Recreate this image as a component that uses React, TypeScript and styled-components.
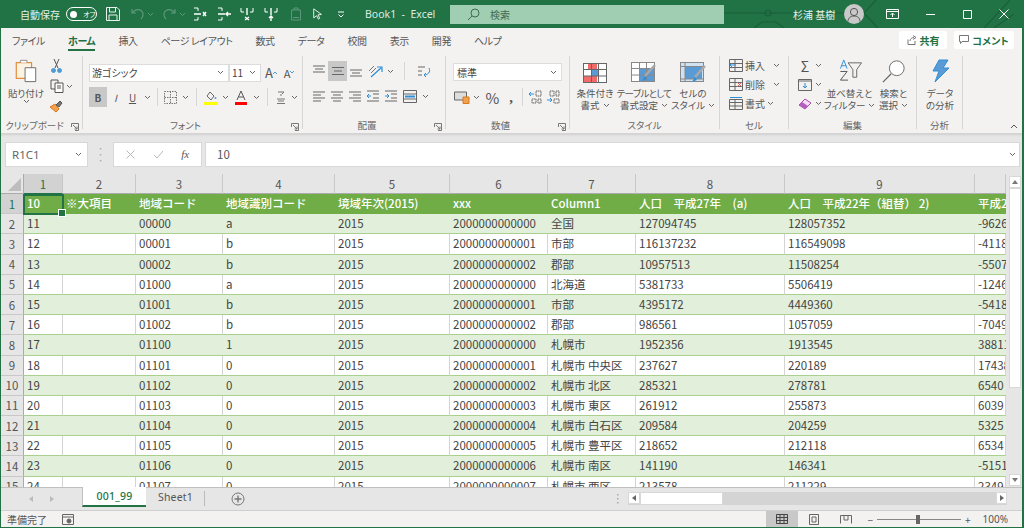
import React from "react"
import styled, { createGlobalStyle } from "styled-components"

const JP = `"Noto Sans CJK JP", "Noto Sans", "Liberation Sans", sans-serif`
const COLS = "39px 73px 87px 112px 115px 98px 88px 149px 190px 31px"

const rows = [
  ["11", "", "00000", "a", "2015", "2000000000000", "全国", "127094745", "128057352", "-9626"],
  ["12", "", "00001", "b", "2015", "2000000000001", "市部", "116137232", "116549098", "-4118"],
  ["13", "", "00002", "b", "2015", "2000000000002", "郡部", "10957513", "11508254", "-5507"],
  ["14", "", "01000", "a", "2015", "2000000000000", "北海道", "5381733", "5506419", "-1246"],
  ["15", "", "01001", "b", "2015", "2000000000001", "市部", "4395172", "4449360", "-5418"],
  ["16", "", "01002", "b", "2015", "2000000000002", "郡部", "986561", "1057059", "-7049"],
  ["17", "", "01100", "1", "2015", "2000000000000", "札幌市", "1952356", "1913545", "38811"],
  ["18", "", "01101", "0", "2015", "2000000000001", "札幌市 中央区", "237627", "220189", "17438"],
  ["19", "", "01102", "0", "2015", "2000000000002", "札幌市 北区", "285321", "278781", "6540"],
  ["20", "", "01103", "0", "2015", "2000000000003", "札幌市 東区", "261912", "255873", "6039"],
  ["21", "", "01104", "0", "2015", "2000000000004", "札幌市 白石区", "209584", "204259", "5325"],
  ["22", "", "01105", "0", "2015", "2000000000005", "札幌市 豊平区", "218652", "212118", "6534"],
  ["23", "", "01106", "0", "2015", "2000000000006", "札幌市 南区", "141190", "146341", "-5151"],
  ["24", "", "01107", "0", "2015", "2000000000007", "札幌市 西区", "213578", "211229", "2349"],
]
const headers = ["10", "※大項目", "地域コード", "地域識別コード", "境域年次(2015)", "xxx", "Column1", "人口　平成27年　(a)", "人口　平成22年（組替） 2)", "平成2"]
const tabs = ["ファイル", "ホーム", "挿入", "ページ レイアウト", "数式", "データ", "校閲", "表示", "開発", "ヘルプ"]

const Global = createGlobalStyle`
  html, body { margin: 0; padding: 0; background: #217346; }
  * { box-sizing: border-box; }
`

const Win = styled.div`
  width: 1024px;
  height: 528px;
  overflow: hidden;
  display: flex;
  flex-direction: column;
  padding: 0 2px 1px 1px;
  background: #217346;
  font-family: ${JP};
  font-feature-settings: "palt";
  color: #444;
  font-size: 10px;
`

/* title bar */
const TitleBar = styled.div`
  position: relative;
  height: 28px;
  margin: 0 -2px 0 -1px;
  display: flex;
  align-items: center;
  color: #fff;
  background: #217346;
  flex: none;
`
const Pattern = styled.svg`
  position: absolute;
  right: 0;
  top: 0;
`
const AutoSave = styled.span`
  margin-left: 20px;
  font-size: 10px;
  color: #e4f0e9;
`
const Toggle = styled.span`
  width: 31px;
  height: 14px;
  margin-left: 6px;
  border: 1px solid #fff;
  border-radius: 7px;
  display: flex;
  align-items: center;
  gap: 6px;
  padding-left: 3px;
  font-size: 7px;
  &::before {
    content: "";
    width: 7px;
    height: 7px;
    border-radius: 50%;
    background: #fff;
  }
`
const Qat = styled.div`
  display: flex;
  align-items: center;
  margin-left: 8px;
  width: 260px;
  flex: none;
`
const QatSlot = styled.span<{ $w: number }>`
  width: ${p => p.$w}px;
  display: flex;
  justify-content: center;
  flex: none;
`
const BookName = styled.span`
  width: 85px;
  flex: none;
  font-size: 10.5px;
  color: #dcebe2;
  font-family: "Noto Sans", sans-serif;
  white-space: pre;
`
const SearchBox = styled.div`
  width: 274px;
  height: 19px;
  flex: none;
  background: #a0ceb3;
  display: flex;
  align-items: center;
  color: #3f6b52;
  padding-left: 17px;
  gap: 10px;
  font-size: 10px;
`
const UserArea = styled.div`
  position: relative;
  margin-left: 69px;
  display: flex;
  align-items: center;
  font-size: 10px;
  color: #e8f2ec;
  white-space: nowrap;
`
const Avatar = styled.span`
  width: 20px;
  height: 20px;
  margin-left: 9px;
  border-radius: 50%;
  background: #c9c9c9;
  display: flex;
  align-items: center;
  justify-content: center;
`
const WinBtn = styled.span<{ $ml: number }>`
  margin-left: ${p => p.$ml}px;
  display: flex;
`

/* tabs */
const TabRow = styled.div`
  height: 24px;
  display: flex;
  align-items: flex-start;
  background: #f3f2f1;
  padding: 5px 8px 0 11px;
  gap: 23px;
  flex: none;
`
const Tab = styled.span<{ $on?: boolean }>`
  position: relative;
  font-size: 10px;
  letter-spacing: -0.4px;
  line-height: 15px;
  white-space: nowrap;
  font-weight: ${p => (p.$on ? 700 : 400)};
  color: ${p => (p.$on ? "#1f6e43" : "#555")};
  ${p => p.$on && `
    &::after {
      content: "";
      position: absolute;
      left: 0;
      right: 0;
      bottom: -3px;
      height: 2px;
      background: #217346;
    }
  `}
`
const TabRight = styled.div`
  margin-left: auto;
  display: flex;
  gap: 7px;
  margin-top: -2px;
`
const ShareBtn = styled.span<{ $w: number }>`
  width: ${p => p.$w}px;
  height: 18px;
  background: #fff;
  border-radius: 2px;
  display: flex;
  align-items: center;
  justify-content: center;
  gap: 3px;
  font-size: 10px;
  font-weight: 700;
  color: #217346;
`

/* ribbon */
const Ribbon = styled.div`
  height: 81px;
  display: flex;
  background: #f3f2f1;
  padding-top: 4px;
  position: relative;
  flex: none;
`
const Group = styled.div<{ $w: number; $last?: boolean }>`
  position: relative;
  width: ${p => p.$w}px;
  flex: none;
  display: flex;
  flex-direction: column;
  border-right: ${p => (p.$last ? "none" : "1px solid #d6d6d6")};
  height: 73px;
`
const GroupBody = styled.div<{ $px?: number }>`
  flex: 1;
  display: flex;
  padding: 0 ${p => p.$px ?? 0}px;
  min-height: 0;
`
const GroupLabel = styled.div<{ $launch?: boolean }>`
  height: 15px;
  margin-bottom: -4px;
  text-align: center;
  font-size: 9.5px;
  line-height: 15px;
  color: #666;
  flex: none;
  padding-right: ${p => (p.$launch ? 14 : 0)}px;
  white-space: nowrap;
`
const Launcher = styled.svg`
  position: absolute;
  right: 3px;
  bottom: -2px;
`
const Stack = styled.div<{ $gap?: number; $pt?: number }>`
  display: flex;
  flex-direction: column;
  gap: ${p => p.$gap ?? 0}px;
  padding-top: ${p => p.$pt ?? 0}px;
  flex: none;
`
const Line = styled.div<{ $h?: number }>`
  display: flex;
  align-items: center;
  height: ${p => p.$h ?? 20}px;
`
const Tool = styled.span<{ $w: number; $on?: boolean }>`
  width: ${p => p.$w}px;
  height: 20px;
  display: flex;
  align-items: center;
  justify-content: center;
  flex: none;
  background: ${p => (p.$on ? "#c8c8c8" : "transparent")};
  color: #555;
`
const Sep = styled.span<{ $m?: number }>`
  width: 1px;
  height: 18px;
  background: #d6d6d6;
  margin: 0 ${p => p.$m ?? 5}px;
  flex: none;
`
const Large = styled.div<{ $w: number }>`
  width: ${p => p.$w}px;
  flex: none;
  display: flex;
  flex-direction: column;
  align-items: center;
  text-align: center;
  font-size: 9.5px;
  line-height: 12px;
  white-space: nowrap;
  color: #555;
`
const LargeIcon = styled.div`
  height: 31px;
  display: flex;
  align-items: flex-end;
  justify-content: center;
  padding-bottom: 4px;
`
const LabelLine = styled.span<{ $tight?: boolean }>`
  display: flex;
  align-items: center;
  gap: 3px;
  height: 12px;
  letter-spacing: ${p => (p.$tight ? "-0.7px" : "0")};
`
const Field = styled.div<{ $w: number; $pad?: number }>`
  width: ${p => p.$w}px;
  height: 18px;
  flex: none;
  background: #fff;
  border: 1px solid #dcdcdc;
  display: flex;
  align-items: center;
  justify-content: space-between;
  padding: 0 4px 0 ${p => p.$pad ?? 2}px;
  font-size: 10px;
  color: #444;
`
const CellLine = styled.div`
  display: flex;
  align-items: center;
  height: 19px;
  font-size: 10px;
  gap: 2px;
  color: #555;
  white-space: nowrap;
  flex: none;
`
const CaretGap = styled.span`
  margin-left: 6px;
  display: flex;
`
const EditLine = styled(CellLine)`
  gap: 3px;
`
const Sigma = styled.span`
  font-size: 14px;
  width: 14px;
  text-align: center;
`
const BigA = styled.span<{ $s: number }>`
  font-size: ${p => p.$s}px;
`
const Percent = styled.span`
  font-size: 15px;
`
const Comma = styled.b`
  font-size: 15px;
  font-family: "Liberation Serif", serif;
`
const Collapse = styled.svg`
  position: absolute;
  right: 4px;
  bottom: 4px;
`

/* formula bar */
const Formula = styled.div`
  height: 41px;
  background: #e6e6e6;
  border-top: 1px solid #d4d4d4;
  box-shadow: inset 0 2px 2px -1px #d0d0d0;
  display: flex;
  align-items: center;
  padding: 0 2px 0 4px;
  flex: none;
`
const NameBox = styled.div`
  width: 83px;
  height: 25px;
  background: #fff;
  border: 1px solid #d8d8d8;
  font-family: "Noto Sans", sans-serif;
  font-size: 11.5px;
  display: flex;
  align-items: center;
  justify-content: space-between;
  padding: 0 5px 0 6px;
  color: #666;
`
const Dots = styled.span`
  width: 25px;
  text-align: center;
  color: #aaa;
  font-size: 12px;
  line-height: 6px;
  white-space: pre-line;
`
const FnButtons = styled.div`
  width: 89px;
  height: 25px;
  background: #fff;
  border: 1px solid #d8d8d8;
  display: flex;
  align-items: center;
  justify-content: space-around;
  padding: 0 3px;
`
const FxMark = styled.span`
  font-family: "Liberation Serif", serif;
  font-style: italic;
  font-size: 11px;
  color: #555;
`
const FormulaInput = styled.div`
  flex: 1;
  height: 25px;
  margin-left: 3px;
  background: #fff;
  border: 1px solid #d8d8d8;
  display: flex;
  align-items: center;
  justify-content: space-between;
  padding: 0 3px 0 11px;
  font-size: 11.5px;
  color: #555;
`

/* sheet */
const Sheet = styled.div`
  flex: 1;
  min-height: 0;
  display: flex;
  background: #e6e6e6;
`
const GridPane = styled.div`
  position: relative;
  width: 1005px;
  flex: none;
  overflow: hidden;
`
const RowBox = styled.div<{ $bg: string; $bold?: boolean; $h?: number }>`
  display: grid;
  grid-template-columns: 23px ${COLS};
  height: ${p => p.$h ?? 20.2}px;
  background: ${p => p.$bg};
  font-weight: ${p => (p.$bold ? 500 : 400)};
  color: ${p => (p.$bold ? "#fff" : "#444")};
  font-feature-settings: normal;
`
const ColHead = styled.div<{ $on?: boolean }>`
  display: flex;
  align-items: center;
  justify-content: center;
  font-size: 11.5px;
  background: ${p => (p.$on ? "#d2d2d2" : "#e6e6e6")};
  color: ${p => (p.$on ? "#217346" : "#555")};
  border-right: 1px solid #c8c8c8;
  border-bottom: 1px solid ${p => (p.$on ? "#217346" : "#ababab")};
`
const RowHead = styled.div<{ $on?: boolean }>`
  display: flex;
  align-items: center;
  justify-content: center;
  font-size: 11.5px;
  font-weight: 400;
  background: ${p => (p.$on ? "#d2d2d2" : "#e6e6e6")};
  color: ${p => (p.$on ? "#217346" : "#555")};
  border-right: 1px solid ${p => (p.$on ? "#217346" : "#ababab")};
  border-bottom: 1px solid #c8c8c8;
`
const Corner = styled.div`
  background: #e6e6e6;
  border-right: 1px solid #ababab;
  border-bottom: 1px solid #ababab;
  display: flex;
  align-items: flex-end;
  justify-content: flex-end;
  padding: 0 2px 2px 0;
`
const Cell = styled.div<{ $line?: boolean; $border: string }>`
  font-size: 11.5px;
  line-height: 19px;
  padding-left: 3px;
  white-space: nowrap;
  overflow: hidden;
  border-right: ${p => (p.$line ? "1px solid #d4d4d4" : "none")};
  border-bottom: 1px solid ${p => p.$border};
`
const Selection = styled.div`
  position: absolute;
  left: 22px;
  top: 20px;
  width: 41px;
  height: 21px;
  border: 2px solid #217346;
  &::after {
    content: "";
    position: absolute;
    right: -4px;
    bottom: -4px;
    width: 6px;
    height: 6px;
    background: #217346;
    border: 1px solid #fff;
  }
`
const VScroll = styled.div`
  flex: 1;
  display: flex;
  flex-direction: column;
  align-items: flex-end;
  padding: 2px 1px 1px 0;
  background: #e6e6e6;
`
const ScrollBtn = styled.div<{ $w?: number }>`
  width: ${p => p.$w ?? 12}px;
  height: 12px;
  flex: none;
  background: #fff;
  border: 1px solid #d8d8d8;
  display: flex;
  align-items: center;
  justify-content: center;
`
const VThumb = styled.div`
  width: 12px;
  height: 200px;
  background: #fff;
  border: 1px solid #d8d8d8;
  margin-bottom: auto;
`

/* sheet tabs */
const TabBar = styled.div`
  height: 24px;
  flex: none;
  display: flex;
  background: #e6e6e6;
  border-top: 1px solid #c0c0c0;
  border-bottom: 1px solid #cfcfcf;
  position: relative;
`
const Nav = styled.div`
  width: 81px;
  display: flex;
  align-items: center;
  justify-content: center;
  gap: 17px;
  flex: none;
`
const SheetTab = styled.div<{ $on?: boolean }>`
  width: ${p => (p.$on ? 64 : 59)}px;
  height: 20px;
  margin-top: -1px;
  display: flex;
  align-items: center;
  justify-content: center;
  font-size: 10.5px;
  font-family: "Noto Sans", sans-serif;
  letter-spacing: 0.2px;
  background: ${p => (p.$on ? "#fff" : "transparent")};
  color: ${p => (p.$on ? "#217346" : "#555")};
  font-weight: ${p => (p.$on ? 500 : 400)};
  border-left: ${p => (p.$on ? "1px solid #c0c0c0" : "none")};
  border-bottom: ${p => (p.$on ? "2px solid #217346" : "none")};
  ${p => !p.$on && `&::after { content: ""; position: absolute; left: 203px; top: 3px; width: 1px; height: 15px; background: #bbb; }`}
`
const AddSheet = styled.span`
  margin-left: 26px;
  display: flex;
  align-items: center;
`
const HDots = styled.span`
  margin-left: 363px;
  width: 20px;
  display: flex;
  align-items: center;
  justify-content: center;
  color: #aaa;
`
const HScroll = styled.div`
  width: 379px;
  height: 13px;
  margin-top: 4px;
  display: flex;
  background: #d4d4d4;
`
const HThumb = styled.div`
  width: 83px;
  background: #fff;
  border: 1px solid #d8d8d8;
  margin-right: auto;
`

/* status bar */
const Status = styled.div`
  height: 16px;
  flex: none;
  display: flex;
  align-items: center;
  background: #f3f2f1;
  font-size: 10px;
  color: #555;
  padding-left: 6px;
`
const StatusGap = styled.span`
  margin-left: 15px;
  margin-right: auto;
  display: flex;
`
const ViewBtn = styled.span<{ $on?: boolean }>`
  width: 32px;
  height: 16px;
  background: ${p => (p.$on ? "#c8c8c8" : "transparent")};
  display: flex;
  align-items: center;
  justify-content: center;
`
const Zoom = styled.div`
  display: flex;
  align-items: center;
  margin-left: 5px;
  margin-right: 14px;
  gap: 4px;
  font-size: 10px;
`
const Slider = styled.div`
  width: 84px;
  height: 1px;
  background: #888;
  position: relative;
  &::after {
    content: "";
    position: absolute;
    left: 39px;
    top: -4px;
    width: 4px;
    height: 9px;
    background: #666;
  }
`
const Pct = styled.span`
  margin-left: 8px;
  font-family: "Noto Sans", sans-serif;
`

const Caret = ({ c = "#666" }: { c?: string }) => (
  <svg width="7" height="5" viewBox="0 0 7 5" fill="none" stroke={c}><path d="M1 1l2.5 2.5L6 1" /></svg>
)
const LaunchIcon = () => (
  <Launcher width="8" height="8" viewBox="0 0 8 8" fill="none" stroke="#777"><path d="M.5 4V.5H7.5V7.5H4M2 2l4 4M6 3.5V6H3.5" /></Launcher>
)
const Lines = ({ d, c = "#666" }: { d: string; c?: string }) => (
  <svg width="14" height="14" viewBox="0 0 14 14" fill="none" stroke={c}><path d={d} /></svg>
)

const qatIcon = (d: string, extra: string, c = "#fff") => (
  <svg width="14" height="14" viewBox="0 0 14 14" fill="none" stroke={c}>
    <path d={d} />
    <path d={extra} strokeWidth="1.4" />
  </svg>
)

const App = () => {
  return (
    <Win>
      <Global />
      <TitleBar>
        <Pattern width="400" height="28" viewBox="0 0 400 28" fill="none" stroke="#1b5f3a" strokeWidth="1.2">
          <path d="M100 13H240l12-13M240 13l14 15M360 28l26-28M390 14l-20 14M130 28l8-6h14l8 6" />
          <circle cx="144" cy="13" r="3" />
        </Pattern>
        <AutoSave>自動保存</AutoSave>
        <Toggle>オフ</Toggle>
        <Qat>
          <QatSlot $w={16}>
            <svg width="14" height="14" viewBox="0 0 14 14" fill="none" stroke="#e8f2ec"><path d="M.5.5H11L13.5 3V13.5H.5zM3.5.5V5h6V.5M3 13.5V8h8v5.5" /></svg>
          </QatSlot>
          <QatSlot $w={8} />
          <QatSlot $w={17}><svg width="14" height="14" viewBox="0 0 14 14" fill="none" stroke="#5d977a" strokeWidth="1.2"><path d="M1 2v4h4M1.5 6C3 3 7 1.500 10 3.500s2.500 6 0 8.500" /></svg></QatSlot>
          <QatSlot $w={8}><Caret c="#5d977a" /></QatSlot>
          <QatSlot $w={6} />
          <QatSlot $w={18}><svg width="14" height="14" viewBox="0 0 14 14" fill="none" stroke="#5d977a" strokeWidth="1.2"><path d="M13 2v4H9M12.500 6C11 3 7 1.500 4 3.500s-2.500 6 0 8.500" /></svg></QatSlot>
          <QatSlot $w={8}><Caret c="#5d977a" /></QatSlot>
          <QatSlot $w={2} />
          <QatSlot $w={24}>{qatIcon("M1 1H5V4M1 13H5V10", "M1 7H8M10 5l3 4M13 5l-3 4")}</QatSlot>
          <QatSlot $w={24}>{qatIcon("M1 1H5V4M1 13H5V10", "M1 7H8M9 7h5M11 5l-2 2 2 2")}</QatSlot>
          <QatSlot $w={22}>{qatIcon("M1 1V5H4M13 1V5H10", "M7 1V8M5 10l4 3M9 10l-4 3")}</QatSlot>
          <QatSlot $w={26}>{qatIcon("M1 1V5H4M13 1V5H10", "M7 1V8M7 14V9M5 11l2-2 2 2")}</QatSlot>
          <QatSlot $w={24}>
            <svg width="12" height="14" viewBox="0 0 12 14" fill="none" stroke="#5d977a"><path d="M1.500 3H10.500V13H1.500zM4 3V1H8V3M3 10.500h6" /></svg>
          </QatSlot>
          <QatSlot $w={20}>
            <svg width="12" height="14" viewBox="0 0 14 14" fill="none" stroke="#fff"><path d="M2 1L11 7.500 7 8 9 12 7.500 13 5.500 9 2 11.500z" /></svg>
          </QatSlot>
          <QatSlot $w={26}>
            <svg width="8" height="7" viewBox="0 0 8 7" fill="none" stroke="#fff"><path d="M1 1H7M1.500 3.500L4 6l2.500-2.500" /></svg>
          </QatSlot>
        </Qat>
        <BookName>{"Book1  -  Excel"}</BookName>
        <SearchBox>
          <svg width="13" height="13" viewBox="0 0 13 13" fill="none" stroke="#3f6b52"><circle cx="8" cy="5" r="4" /><path d="M5 8L1 12" /></svg>
          検索
        </SearchBox>
        <UserArea>
          杉浦 基樹
          <Avatar>
            <svg width="14" height="15" viewBox="0 0 14 15" fill="none" stroke="#555"><circle cx="7" cy="5" r="3.600" /><path d="M1 14.500C1 11 3.500 9 7 9s6 2 6 5.500" /></svg>
          </Avatar>
          <WinBtn $ml={22}>
            <svg width="13" height="10" viewBox="0 0 13 10" fill="none" stroke="#fff"><path d="M.5.500H12.500V9.500H.5zM.5 2.500H12.500M6.500 8V4.500M4.500 6l2-2 2 2" /></svg>
          </WinBtn>
          <WinBtn $ml={27}>
            <svg width="9" height="1" viewBox="0 0 9 1"><path d="M0 .5H9" stroke="#fff" /></svg>
          </WinBtn>
          <WinBtn $ml={28}>
            <svg width="9" height="9" viewBox="0 0 9 9" fill="none" stroke="#fff"><path d="M.5.500H8.500V8.500H.5z" /></svg>
          </WinBtn>
          <WinBtn $ml={27}>
            <svg width="10" height="10" viewBox="0 0 10 10" fill="none" stroke="#fff"><path d="M.5.500l9 9M9.500.500l-9 9" /></svg>
          </WinBtn>
        </UserArea>
      </TitleBar>

      <TabRow>
        {tabs.map(t => (
          <Tab key={t} $on={t === "ホーム"}>{t}</Tab>
        ))}
        <TabRight>
          <ShareBtn $w={48}>
            <svg width="10" height="10" viewBox="0 0 10 10" fill="none" stroke="#777"><path d="M1 4.500V9.500H8V6M3 6c0-2 2-3.500 4-3.500M6 .5l3 2-3 2" /></svg>
            共有
          </ShareBtn>
          <ShareBtn $w={60}>
            <svg width="10" height="10" viewBox="0 0 10 10" fill="none" stroke="#777"><path d="M.5.500H9.500V6.500H3L1.500 8.500V6.500H.5z" /></svg>
            コメント
          </ShareBtn>
        </TabRight>
      </TabRow>

      <Ribbon>
        <Group $w={82}>
          <GroupBody $px={3}>
            <Large $w={44}>
              <LargeIcon>
                <svg width="24" height="25" viewBox="0 0 24 27" fill="none">
                  <path d="M1.500 5H18V22H1.500z" fill="#fdf3e3" stroke="#e0903c" strokeWidth="1.300" />
                  <path d="M6 5V2.500H13V5" stroke="#8a8a8a" fill="#fff" />
                  <path d="M11 10.500H22.500V25.500H11z" fill="#fff" stroke="#666" />
                </svg>
              </LargeIcon>
              <span>貼り付け</span>
              <Caret />
            </Large>
            <Stack>
              <Tool $w={16}>
                <svg width="11" height="16" viewBox="0 0 11 16" fill="none" stroke="#555"><path d="M3 1l4 9M8 1l-4 9" /><circle cx="2.500" cy="12.500" r="2" fill="#4d9bd5" stroke="#4d9bd5" /><circle cx="8.500" cy="12.500" r="2" fill="#4d9bd5" stroke="#4d9bd5" /></svg>
              </Tool>
              <Line>
                <Tool $w={18}>
                  <svg width="14" height="14" viewBox="0 0 14 14" fill="none" stroke="#555"><path d="M1 1H8V10H1z" /><path d="M5 4H13V13.500H5z" fill="#fff" /><path d="M7 7H11M7 9H11" /></svg>
                </Tool>
                <Caret />
              </Line>
              <Tool $w={16}>
                <svg width="14" height="14" viewBox="0 0 14 14" fill="none"><path d="M1 8l5-3 4 5-3 3z" fill="#f2a24c" stroke="#d9781e" /><path d="M7 6l4-4 2 2-3 4z" fill="#777" stroke="#555" /></svg>
              </Tool>
            </Stack>
          </GroupBody>
          <GroupLabel $launch>クリップボード</GroupLabel>
          <LaunchIcon />
        </Group>

        <Group $w={220}>
          <GroupBody $px={6}>
            <Stack $pt={7} $gap={5}>
              <Line $h={19}>
                <Field $w={140}>游ゴシック<Caret /></Field>
                <Field $w={32}>11<Caret /></Field>
                <Tool $w={20}><BigA $s={13}>A</BigA><svg width="4" height="3" viewBox="0 0 4 3" fill="none" stroke="#4d9bd5"><path d="M0 3l2-2 2 2" /></svg></Tool>
                <Tool $w={16}><BigA $s={11}>A</BigA><svg width="4" height="3" viewBox="0 0 4 3" fill="none" stroke="#4d9bd5"><path d="M0 0l2 2 2-2" /></svg></Tool>
              </Line>
              <Line>
                <Tool $w={18} $on><b>B</b></Tool>
                <Tool $w={17}><i>I</i></Tool>
                <Tool $w={17}><u>U</u></Tool>
                <Tool $w={12}><Caret /></Tool>
                <Sep $m={4} />
                <Tool $w={17}>
                  <svg width="13" height="13" viewBox="0 0 13 13" fill="none" stroke="#777"><path d="M.5.500H12.500V12.500H.5zM6.500.500V12.500M.5 6.500H12.500" strokeDasharray="1.500 1" /></svg>
                </Tool>
                <Tool $w={12}><Caret /></Tool>
                <Sep $m={5} />
                <Tool $w={17}>
                  <svg width="14" height="15" viewBox="0 0 14 15" fill="none"><path d="M3 6l3-4 4 4-3 4z" stroke="#666" /><circle cx="11.500" cy="8" r="1" fill="#4d9bd5" /><path d="M0 13.500H14" stroke="#ffff00" strokeWidth="3" /></svg>
                </Tool>
                <Tool $w={12}><Caret /></Tool>
                <Tool $w={19}>
                  <svg width="14" height="15" viewBox="0 0 14 15" fill="none"><path d="M3 10L7 1l4 9M4.500 7H9.500" stroke="#555" /><path d="M1 13.500H13" stroke="#f00" strokeWidth="3" /></svg>
                </Tool>
                <Tool $w={13}><Caret /></Tool>
                <Sep $m={4} />
                <Tool $w={17}>
                  <svg width="12" height="15" viewBox="0 0 12 15" fill="none" stroke="#777"><path d="M3 2H9L7 4M6 4V6M2 9H10M3 11H9M2 13.500H10" /></svg>
                </Tool>
                <Tool $w={10}><Caret /></Tool>
              </Line>
            </Stack>
          </GroupBody>
          <GroupLabel $launch>フォント</GroupLabel>
          <LaunchIcon />
        </Group>

        <Group $w={143}>
          <GroupBody $px={7}>
            <Stack $pt={5} $gap={5}>
              <Line>
                <Tool $w={18}><Lines d="M1 2H13M3 5H11M1 8H13" /></Tool>
                <Tool $w={19} $on><Lines d="M1 3.500H13M3 7H11M1 10.500H13" /></Tool>
                <Tool $w={18}><Lines d="M1 6H13M3 9H11M1 12H13" /></Tool>
                <Tool $w={20}>
                  <svg width="15" height="14" viewBox="0 0 15 14" fill="none"><path d="M1 7l5-5M3 9l5-5" stroke="#777" /><path d="M3 13L13 4M9 3h5v5" stroke="#2f8fd6" strokeWidth="1.200" /></svg>
                </Tool>
                <Tool $w={10}><Caret /></Tool>
                <Sep $m={9} />
                <Tool $w={19}>
                  <svg width="14" height="16" viewBox="0 0 14 16" fill="none"><path d="M1 4H8M1 8H5M1 12H5" stroke="#666" /><path d="M12 5c2 4-1 7-5 7M9 10l-2 2 2 2" stroke="#2f8fd6" /></svg>
                </Tool>
              </Line>
              <Line>
                <Tool $w={18}><Lines d="M1 3H13M1 6H9M1 9H13M1 12H9" /></Tool>
                <Tool $w={18}><Lines d="M1 3H13M3 6H11M1 9H13M3 12H11" /></Tool>
                <Tool $w={18}><Lines d="M1 3H13M5 6H13M1 9H13M5 12H13" /></Tool>
                <Tool $w={18}>
                  <svg width="14" height="14" viewBox="0 0 14 14" fill="none"><path d="M1 2H13M7 5H13M7 9H13M1 12H13" stroke="#666" /><path d="M5 7H1M3 5L1 7l2 2" stroke="#2f8fd6" /></svg>
                </Tool>
                <Tool $w={18}>
                  <svg width="14" height="14" viewBox="0 0 14 14" fill="none"><path d="M1 2H13M7 5H13M7 9H13M1 12H13" stroke="#666" /><path d="M1 7H5M3 5l2 2-2 2" stroke="#2f8fd6" /></svg>
                </Tool>
                <Tool $w={20}>
                  <svg width="14" height="13" viewBox="0 0 14 13" fill="none"><path d="M.5.500H13.500V12.500H.5zM.5 4H13.500M.5 9H13.500" stroke="#666" /><path d="M2 6.500H12" stroke="#2f8fd6" strokeWidth="2" /></svg>
                </Tool>
                <Tool $w={10}><Caret /></Tool>
              </Line>
            </Stack>
          </GroupBody>
          <GroupLabel $launch>配置</GroupLabel>
          <LaunchIcon />
        </Group>

        <Group $w={124}>
          <GroupBody $px={7}>
            <Stack $pt={7} $gap={6}>
              <Field $w={109} $pad={3}>標準<Caret /></Field>
              <Line>
                <Tool $w={18}>
                  <svg width="16" height="14" viewBox="0 0 16 14" fill="none"><path d="M.5 2H12.500V10H.5z" stroke="#666" fill="#ddd" /><path d="M9 7H15V13.500H9z" fill="#f2a24c" stroke="#d9781e" /></svg>
                </Tool>
                <Tool $w={11}><Caret /></Tool>
                <Tool $w={21}><Percent>%</Percent></Tool>
                <Tool $w={16}><Comma>,</Comma></Tool>
                <Sep $m={3} />
                <Tool $w={18}>
                  <svg width="14" height="14" viewBox="0 0 14 14" fill="none"><path d="M6 4H1M3 2L1 4l2 2" stroke="#2f8fd6" /><path d="M8 1h5v5H8zM4 9h4v4H4zM10 9h3v4h-3z" stroke="#666" strokeDasharray="1.500 .5" /></svg>
                </Tool>
                <Tool $w={18}>
                  <svg width="14" height="14" viewBox="0 0 14 14" fill="none"><path d="M1 10H6M4 8l2 2-2 2" stroke="#2f8fd6" /><path d="M4 1h4v5H4zM10 1h3v5h-3zM8 9h5v4H8z" stroke="#666" strokeDasharray="1.500 .5" /></svg>
                </Tool>
              </Line>
            </Stack>
          </GroupBody>
          <GroupLabel $launch>数値</GroupLabel>
          <LaunchIcon />
        </Group>

        <Group $w={150}>
          <GroupBody $px={3}>
            <Large $w={44}>
              <LargeIcon>
                <svg width="24" height="20" viewBox="0 0 24 20" fill="none"><rect x=".5" y=".5" width="23" height="19" fill="#fff" stroke="#666" /><rect x="5" y="1" width="9" height="5" fill="#f26a6a" /><rect x="9" y="7" width="6" height="6" fill="#5b9bd5" /><rect x="1" y="13" width="13" height="6" fill="#f26a6a" /><path d="M.5 6.500H23.500M.5 13H23.500M8.500.500V19.500M15.500.500V19.500" stroke="#666" /></svg>
              </LargeIcon>
              <span>条件付き</span>
              <LabelLine>書式<Caret /></LabelLine>
            </Large>
            <Large $w={54}>
              <LargeIcon>
                <svg width="26" height="21" viewBox="0 0 26 21" fill="none"><rect x=".5" y=".5" width="23" height="19" fill="#fff" stroke="#888" /><rect x="9" y="7" width="14" height="12" fill="#5b9bd5" /><path d="M.5 6.500H23.500M.5 13H23.500M8.500.500V19.500M15.500.500V19.500" stroke="#888" /><path d="M24 3L14 14" stroke="#a9a9a9" strokeWidth="2.500" /><path d="M14 14l-3 5 5-2z" fill="#2f8fd6" /></svg>
              </LargeIcon>
              <LabelLine $tight>テーブルとして</LabelLine>
              <LabelLine>書式設定<Caret /></LabelLine>
            </Large>
            <Large $w={44}>
              <LargeIcon>
                <svg width="26" height="21" viewBox="0 0 26 21" fill="none"><rect x=".5" y=".5" width="23" height="19" fill="#cfe2f3" stroke="#888" /><rect x="5" y="5" width="17" height="12" fill="#5b9bd5" /><path d="M.5 4.500H23.500M.5 17H23.500M5 .500V19.500" stroke="#888" /><path d="M25 4L15 15" stroke="#a9a9a9" strokeWidth="2.500" /><path d="M15 15l-3 5 5-2z" fill="#2f8fd6" /></svg>
              </LargeIcon>
              <span>セルの</span>
              <LabelLine>スタイル<Caret /></LabelLine>
            </Large>
          </GroupBody>
          <GroupLabel>スタイル</GroupLabel>
        </Group>

        <Group $w={69}>
          <GroupBody $px={9}>
            <Stack>
              <CellLine>
                <svg width="14" height="13" viewBox="0 0 14 13" fill="none"><path d="M.5.500H13.500V12.500H.5zM.5 4.500H13.500M.5 8.500H13.500M6 .500V12.500" stroke="#666" /><path d="M7 6H1M3 4L1 6l2 2" stroke="#2f8fd6" /></svg>
                挿入
                <CaretGap><Caret /></CaretGap>
              </CellLine>
              <CellLine>
                <svg width="14" height="13" viewBox="0 0 14 13" fill="none"><path d="M.5.500H13.500V12.500H.5zM.5 4.500H13.500M.5 8.500H13.500M6 .500V12.500" stroke="#666" /><path d="M8 4l5 5M13 4l-5 5" stroke="#e55" /></svg>
                削除
                <CaretGap><Caret /></CaretGap>
              </CellLine>
              <CellLine>
                <svg width="14" height="13" viewBox="0 0 14 13" fill="none"><path d="M.5 2.500H13.500V12.500H.5zM.5 5.500H13.500M.5 9H13.500M6 2.500V12.500" stroke="#666" /><path d="M1 .5H13" stroke="#2f8fd6" /></svg>
                書式
                <Caret />
              </CellLine>
            </Stack>
          </GroupBody>
          <GroupLabel>セル</GroupLabel>
        </Group>

        <Group $w={128}>
          <GroupBody $px={9}>
            <Stack>
              <EditLine>
                <Sigma>Σ</Sigma>
                <Caret />
              </EditLine>
              <EditLine>
                <svg width="14" height="12" viewBox="0 0 14 12" fill="none"><path d="M.5.500H13.500V11.500H.5z" stroke="#666" /><path d="M.5 2H13.500" stroke="#666" /><path d="M7 4V9M5 7l2 2 2-2" stroke="#2f8fd6" /></svg>
                <Caret />
              </EditLine>
              <EditLine>
                <svg width="14" height="12" viewBox="0 0 14 12" fill="none"><path d="M1 7l6-6 6 4-6 6z" stroke="#a64ca6" fill="#f4dcf4" /><path d="M1 7l3-3 6 4-3 3z" fill="#b35fc0" /></svg>
                <Caret />
              </EditLine>
            </Stack>
            <Large $w={55}>
              <LargeIcon>
                <svg width="26" height="24" viewBox="0 0 26 25" fill="none"><path d="M11 22H3l7-9H3" stroke="#555" /><path d="M3 10L6.500 1 10 10M4 7H9" stroke="#2f8fd6" /><path d="M11 4H25L20 11V19H16V11z" stroke="#666" /></svg>
              </LargeIcon>
              <span>並べ替えと</span>
              <LabelLine>フィルター<Caret /></LabelLine>
            </Large>
            <Large $w={33}>
              <LargeIcon>
                <svg width="24" height="24" viewBox="0 0 26 26" fill="none" stroke="#666"><circle cx="16" cy="10" r="8" fill="#fff" /><path d="M10 16L1 25" strokeWidth="1.300" /></svg>
              </LargeIcon>
              <span>検索と</span>
              <LabelLine>選択<Caret /></LabelLine>
            </Large>
          </GroupBody>
          <GroupLabel>編集</GroupLabel>
        </Group>

        <Group $w={46}>
          <GroupBody>
            <Large $w={46}>
              <LargeIcon>
                <svg width="19" height="24" viewBox="0 0 19 24" fill="#5b9bd5" stroke="#2f8fd6"><path d="M8 1h9l-5 8h6L4 23l4-11H2z" /></svg>
              </LargeIcon>
              <span>データ</span>
              <span>の分析</span>
            </Large>
          </GroupBody>
          <GroupLabel>分析</GroupLabel>
        </Group>
        <Collapse width="8" height="5" viewBox="0 0 8 5" fill="none" stroke="#555"><path d="M1 4l3-3 3 3" /></Collapse>
      </Ribbon>

      <Formula>
        <NameBox>R1C1<Caret /></NameBox>
        <Dots>{"·\n·\n·"}</Dots>
        <FnButtons>
          <svg width="9" height="9" viewBox="0 0 9 9" fill="none" stroke="#bbb"><path d="M.5.500l8 8M8.500.500l-8 8" /></svg>
          <svg width="11" height="9" viewBox="0 0 11 9" fill="none" stroke="#bbb"><path d="M1 5l3 3 6-7" /></svg>
          <FxMark>fx</FxMark>
        </FnButtons>
        <FormulaInput>10<Caret /></FormulaInput>
      </Formula>

      <Sheet>
        <GridPane>
          <RowBox $bg="#e6e6e6" $h={20}>
            <Corner>
              <svg width="13" height="13" viewBox="0 0 13 13"><path d="M13 0V13H0z" fill="#bdbdbd" /></svg>
            </Corner>
            {Array.from({ length: 10 }, (_, i) => (
              <ColHead key={i} $on={i === 0}>{i < 9 ? i + 1 : ""}</ColHead>
            ))}
          </RowBox>
          <RowBox $bg="#70ad47" $bold>
            <RowHead $on>1</RowHead>
            {headers.map(h => (
              <Cell key={h} $border="#70ad47">{h}</Cell>
            ))}
          </RowBox>
          {rows.map((r, i) => {
            const band = i % 2 === 0
            return (
              <RowBox key={r[0]} $bg={band ? "#e2efda" : "#fff"}>
                <RowHead>{i + 2}</RowHead>
                {r.map((c, j) => (
                  <Cell key={j} $line={!band} $border="#a9d08e">{c}</Cell>
                ))}
              </RowBox>
            )
          })}
          <Selection />
        </GridPane>
        <VScroll>
          <ScrollBtn>
            <svg width="6" height="4" viewBox="0 0 6 4"><path d="M3 0l3 4H0z" fill="#777" /></svg>
          </ScrollBtn>
          <VThumb />
          <ScrollBtn>
            <svg width="6" height="4" viewBox="0 0 6 4"><path d="M3 4L0 0h6z" fill="#777" /></svg>
          </ScrollBtn>
        </VScroll>
      </Sheet>

      <TabBar>
        <Nav>
          <svg width="4" height="6" viewBox="0 0 4 6"><path d="M4 0v6L0 3z" fill="#bbb" /></svg>
          <svg width="4" height="6" viewBox="0 0 4 6"><path d="M0 0v6l4-3z" fill="#bbb" /></svg>
        </Nav>
        <SheetTab $on>001_99</SheetTab>
        <SheetTab>Sheet1</SheetTab>
        <AddSheet>
          <svg width="14" height="14" viewBox="0 0 14 14" fill="none" stroke="#777"><circle cx="7" cy="7" r="6" /><path d="M7 3.500V10.500M3.500 7H10.500" strokeWidth="1.400" /></svg>
        </AddSheet>
        <HDots>
          <svg width="2" height="10" viewBox="0 0 2 10" fill="#aaa"><rect width="1.500" height="1.500" /><rect y="4" width="1.500" height="1.500" /><rect y="8" width="1.500" height="1.500" /></svg>
        </HDots>
        <HScroll>
          <ScrollBtn $w={12}><svg width="4" height="6" viewBox="0 0 4 6"><path d="M4 0v6L0 3z" fill="#666" /></svg></ScrollBtn>
          <HThumb />
          <ScrollBtn $w={11}><svg width="4" height="6" viewBox="0 0 4 6"><path d="M0 0v6l4-3z" fill="#666" /></svg></ScrollBtn>
        </HScroll>
      </TabBar>

      <Status>
        準備完了
        <StatusGap>
          <svg width="12" height="11" viewBox="0 0 12 11" fill="none" stroke="#666"><path d="M.5.500H11.500V10.500H.5zM.5 3H11.500" /><circle cx="7" cy="7" r="2" fill="#666" /></svg>
        </StatusGap>
        <ViewBtn $on>
          <svg width="12" height="10" viewBox="0 0 12 10" fill="none" stroke="#444"><path d="M.5.500H11.500V9.500H.5zM.5 3.500H11.500M.5 6.500H11.500M4 .500V9.500M8 .500V9.500" /></svg>
        </ViewBtn>
        <ViewBtn>
          <svg width="10" height="11" viewBox="0 0 10 11" fill="none" stroke="#666"><path d="M.5.500H9.500V10.500H.5zM3 3H7V8H3z" /></svg>
        </ViewBtn>
        <ViewBtn>
          <svg width="12" height="9" viewBox="0 0 12 9" fill="none" stroke="#666"><path d="M.5 8.500V.500H11.500V8.500M4 .500V5H8V.500" /></svg>
        </ViewBtn>
        <Zoom>
          <span>−</span>
          <Slider />
          <span>+</span>
          <Pct>100%</Pct>
        </Zoom>
      </Status>
    </Win>
  )
}

export default App
